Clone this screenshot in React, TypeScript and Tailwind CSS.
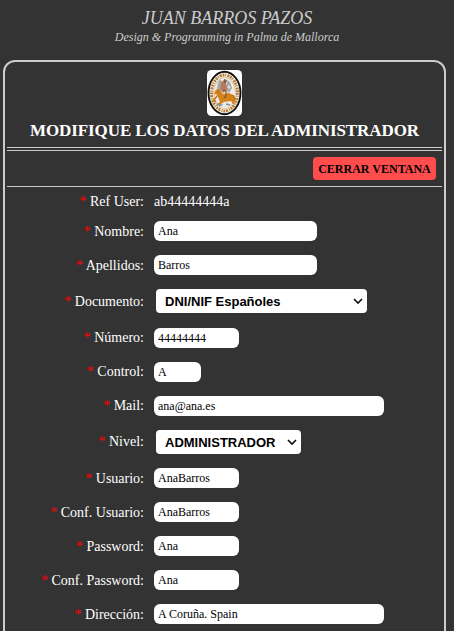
import React from "react";

type Field = {
  label: string;
  value: string;
  kind: "text" | "input" | "select";
  row: string;
  labelPad: string;
  box: string;
};

const fields: Field[] = [
  { label: "Ref User", value: "ab44444444a", kind: "text", row: "h-[27px] pt-[5px]", labelPad: "", box: "" },
  { label: "Nombre", value: "Ana", kind: "input", row: "h-[34px] pt-[7px]", labelPad: "pt-px", box: "w-[163px]" },
  { label: "Apellidos", value: "Barros", kind: "input", row: "h-[34px] pt-[7px]", labelPad: "pt-px", box: "w-[163px]" },
  { label: "Documento", value: "DNI/NIF Españoles", kind: "select", row: "h-[39px] pt-[7px]", labelPad: "pt-[3px]", box: "w-[211px]" },
  { label: "Número", value: "44444444", kind: "input", row: "h-[34px] pt-[7px]", labelPad: "", box: "w-[85px]" },
  { label: "Control", value: "A", kind: "input", row: "h-[34px] pt-[7px]", labelPad: "", box: "w-[47px]" },
  { label: "Mail", value: "ana@ana.es", kind: "input", row: "h-[34px] pt-[7px]", labelPad: "", box: "w-[230px]" },
  { label: "Nivel", value: "ADMINISTRADOR", kind: "select", row: "h-[38px] pt-[7px]", labelPad: "pt-[2px]", box: "w-[145px]" },
  { label: "Usuario", value: "AnaBarros", kind: "input", row: "h-[34px] pt-[7px]", labelPad: "pt-px", box: "w-[85px]" },
  { label: "Conf. Usuario", value: "AnaBarros", kind: "input", row: "h-[34px] pt-[7px]", labelPad: "pt-px", box: "w-[85px]" },
  { label: "Password", value: "Ana", kind: "input", row: "h-[34px] pt-[7px]", labelPad: "pt-px", box: "w-[85px]" },
  { label: "Conf. Password", value: "Ana", kind: "input", row: "h-[34px] pt-[7px]", labelPad: "pt-px", box: "w-[85px]" },
  { label: "Dirección", value: "A Coruña. Spain", kind: "input", row: "h-[34px] pt-[7px]", labelPad: "pt-px", box: "w-[230px]" },
];

function Seal() {
  return (
    <svg viewBox="0 0 35 46" className="h-[46px] w-[35px] shrink-0">
      <rect width="35" height="46" rx="4.5" fill="#fdfdfd" />
      <ellipse cx="17.5" cy="23" rx="16" ry="21.2" fill="#f4efe5" stroke="#10100e" strokeWidth="1.9" />
      <ellipse cx="17.5" cy="23" rx="13" ry="18" fill="none" stroke="#b67b35" strokeWidth="3" strokeDasharray="1.8 1 0.9 1.3 2 0.9" />
      <ellipse cx="17.5" cy="23" rx="11" ry="15.7" fill="#eeebe4" stroke="#c9ab7b" strokeWidth="0.6" />
      <path d="M11 12l2-3 2 3 1 6-3 4-3-3zM20 10l3 2 2 6-3 5-3-3z" fill="#a3adb0" />
      <path d="M14 12l3-2 2 3 1 7-4 3-3-4z" fill="#b57a5a" />
      <path d="M17 9l3 1-1 3h-2z" fill="#81604a" />
      <path d="M8 21l2-2 3 1 3 4 6-1 4 2 3 4-2 2 1 4-2-1-2-3-7 1-3 2-4 2-1-1 4-3-2-5-2-3-2 1z" fill="#d5821c" />
      <path d="M25 25c3 1 3 4 2 6M10 26l-3 4 2 2M12 20l-1 3" fill="none" stroke="#bd6b12" strokeWidth="1.3" />
      <path d="M16 20l3 1v5l-2 2" fill="none" stroke="#8c5330" strokeWidth="1.3" />
      <path d="M10 34l4 1-2 1M19 34l4 1" fill="none" stroke="#7894a2" strokeWidth="1.6" />
      <circle cx="22" cy="17" r="2.2" fill="#d6dde0" stroke="#9a7965" strokeWidth="0.6" />
    </svg>
  );
}

function Chevron() {
  return (
    <svg viewBox="0 0 10 6" className="mr-[4px] h-[6px] w-[10px]" fill="none" stroke="#111111" strokeWidth="1.7">
      <path d="M1 1l4 4 4-4" />
    </svg>
  );
}

function Control({ field }: { field: Field }) {
  if (field.kind === "text") {
    return <span className="ml-[10px] text-[14px] leading-[20px]">{field.value}</span>;
  }
  if (field.kind === "select") {
    return (
      <div className={`ml-[12px] flex h-[24px] items-center justify-between rounded-[4px] bg-white pl-[9px] font-['Liberation_Sans',Arial,sans-serif] text-[13px] font-bold text-black ${field.box}`}>
        <span className="pt-[2px] leading-[20px]">{field.value}</span>
        <Chevron />
      </div>
    );
  }
  return (
    <input
      type="text"
      defaultValue={field.value}
      className={`ml-[10px] h-[20px] rounded-[6px] bg-white px-[4px] pt-[1px] text-[12px] text-black outline-none ${field.box}`}
    />
  );
}

export default function App() {
  return (
    <div className="h-[631px] w-[454px] overflow-hidden bg-[#333333] font-['Liberation_Serif','Times_New_Roman',serif] text-white">
      <header className="flex h-[60px] flex-col items-center pt-[8px] text-[#cccccc] italic">
        <div className="text-[18px] leading-[20px] whitespace-nowrap">JUAN BARROS PAZOS</div>
        <div className="text-[12px] leading-[18px] whitespace-nowrap">Design &amp; Programming in Palma de Mallorca</div>
      </header>
      <main className="ml-[3px] h-[600px] w-[443px] rounded-[12px] border-2 border-[#cccccc] px-[2px]">
        <div className="flex h-[86px] flex-col items-center border-b border-[#cccccc] pt-[8px]">
          <Seal />
          <h1 className="mt-[5px] text-[17px] leading-[20px] font-bold tracking-[-0.09px] whitespace-nowrap">MODIFIQUE LOS DATOS DEL ADMINISTRADOR</h1>
        </div>
        <div className="mt-[2px] flex h-[37px] justify-end border-y border-[#cccccc] pt-[6px] pr-[6px]">
          <button className="h-[23px] w-[123px] rounded-[4px] bg-[#ff4d4d] text-[12px] font-bold whitespace-nowrap text-black">CERRAR VENTANA</button>
        </div>
        <div>
          {fields.map((field) => (
            <div key={field.label} className={`flex items-start ${field.row}`}>
              <label className={`w-[137px] text-right text-[14px] leading-[20px] whitespace-nowrap ${field.labelPad}`}>
                <span className="text-[#ff0000]">*</span> {field.label}:
              </label>
              <Control field={field} />
            </div>
          ))}
        </div>
      </main>
    </div>
  );
}
